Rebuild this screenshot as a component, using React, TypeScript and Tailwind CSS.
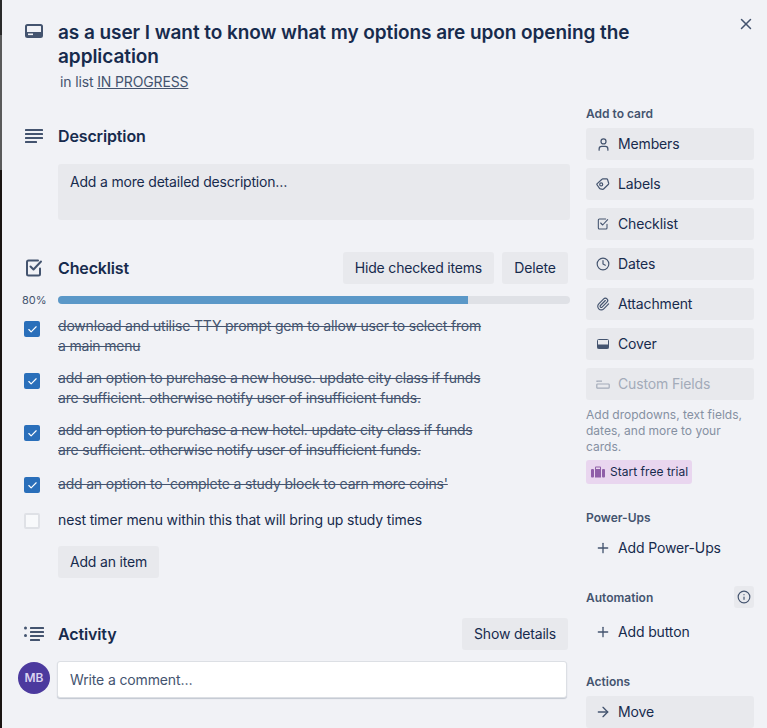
import React from 'react';
import { Check, Clock, Info, Paperclip, Plus, User, X, ArrowRight } from 'lucide-react';

const CardIcon = ({ className }: { className?: string }) => (
  <svg viewBox="0 0 18 14" className={className} fill="none">
    <rect x="1" y="1" width="16" height="12" rx="1.5" stroke="#44546f" strokeWidth="2" />
    <rect x="1" y="8" width="16" height="5" fill="#44546f" />
    <rect x="3" y="9.5" width="5" height="1.6" fill="#f1f2f6" />
  </svg>
);

const LinesIcon = () => (
  <svg width="18" height="16" viewBox="0 0 18 16" fill="#44546f">
    <rect x="0" y="0" width="18" height="2" rx="0.5" />
    <rect x="0" y="4" width="18" height="2" rx="0.5" />
    <rect x="0" y="8" width="18" height="2" rx="0.5" />
    <rect x="0" y="12" width="12" height="2" rx="0.5" />
  </svg>
);

const ChecklistIcon = ({ size = 18, stroke = 2 }: { size?: number; stroke?: number }) => (
  <svg width={size} height={size} viewBox="0 0 18 18" fill="none" stroke="#44546f" strokeWidth={stroke} strokeLinecap="round" strokeLinejoin="round">
    <path d="M15 9.5V15a1.5 1.5 0 0 1-1.5 1.5h-10A1.5 1.5 0 0 1 2 15V3a1.5 1.5 0 0 1 1.5-1.5H13" />
    <path d="M5.5 7.5 8.5 10.5 16 2.5" />
  </svg>
);

const ActivityIcon = () => (
  <svg width="20" height="16" viewBox="0 0 20 16" fill="#44546f">
    <circle cx="1.5" cy="2" r="1.5" />
    <circle cx="1.5" cy="9.5" r="1.5" />
    <rect x="6" y="1" width="14" height="2" rx="0.5" />
    <rect x="6" y="5" width="14" height="2" rx="0.5" />
    <rect x="6" y="9" width="14" height="2" rx="0.5" />
    <rect x="6" y="13" width="10" height="2" rx="0.5" />
  </svg>
);

const LabelIcon = () => (
  <svg width="14" height="14" viewBox="0 0 14 14" fill="none" stroke="#44546f" strokeWidth="1.2" strokeLinejoin="round">
    <path d="M1.2 6.6 6 2.2a1 1 0 0 1 .7-.3h4a1 1 0 0 1 .8.5l1.2 3.8a1 1 0 0 1-.2 1L7.6 12a1 1 0 0 1-.8.3l-2.5-.4a1 1 0 0 1-.6-.3L1.2 8a1 1 0 0 1 0-1.4Z" />
    <circle cx="5.2" cy="7.4" r="1.5" />
  </svg>
);

const CoverIcon = () => (
  <svg width="12" height="10" viewBox="0 0 12 10" fill="none">
    <rect x="0.5" y="0.5" width="11" height="9" rx="1" stroke="#44546f" />
    <rect x="0.5" y="5.5" width="11" height="4" fill="#44546f" />
  </svg>
);

const FieldsIcon = () => (
  <svg width="14" height="9" viewBox="0 0 14 9" fill="none" stroke="#a3abb9" strokeWidth="1.2">
    <path d="M1 2V1.2h5" />
    <rect x="0.8" y="4" width="12.4" height="4.2" rx="0.8" />
  </svg>
);

const BriefcaseIcon = () => (
  <svg width="14" height="12" viewBox="0 0 14 12" fill="#8f5fa8">
    <path d="M4 3V1.5A1 1 0 0 1 5 .5h4a1 1 0 0 1 1 1V3H9V1.6H5V3H4Z" />
    <rect x="0" y="3" width="3" height="8.5" rx="1" />
    <rect x="11" y="3" width="3" height="8.5" rx="1" />
    <rect x="4" y="3" width="6" height="8.5" />
  </svg>
);

const Btn = ({ icon, label, muted }: { icon?: React.ReactNode; label: string; muted?: boolean }) => (
  <div className={`h-8 rounded-[3px] bg-[#e8e9ed] flex items-center text-sm ${muted ? 'text-[#a3abb9]' : 'text-[#172b4d]'}`}>
    <span className="w-8 pl-[2px] flex justify-center shrink-0">{icon}</span>
    {label}
  </div>
);

const GhostBtn = ({ label }: { label: string }) => (
  <div className="h-8 flex items-center text-sm text-[#172b4d]">
    <span className="w-8 pl-[2px] flex justify-center shrink-0">
      <Plus size={16} color="#44546f" />
    </span>
    {label}
  </div>
);

const TextBtn = ({ label, className = '' }: { label: string; className?: string }) => (
  <div className={`h-8 px-3 rounded-[3px] bg-[#e8e9ed] flex items-center justify-center text-sm tracking-[-0.19px] text-[#172b4d] ${className}`}>{label}</div>
);

const SideLabel = ({ children }: { children: React.ReactNode }) => (
  <div className="text-xs leading-4 font-semibold tracking-normal text-[#44546f]">{children}</div>
);

const items = [
  { text: 'download and utilise TTY prompt gem to allow user to select from a main menu', done: true, row: 'mb-3', box: 'pt-[5px]' },
  { text: 'add an option to purchase a new house. update city class if funds are sufficient. otherwise notify user of insufficient funds.', done: true, row: 'mb-3', box: 'pt-[5px]' },
  { text: 'add an option to purchase a new hotel. update city class if funds are sufficient. otherwise notify user of insufficient funds.', done: true, row: 'mb-[14px]', box: 'pt-[5px]' },
  { text: "add an option to 'complete a study block to earn more coins'", done: true, row: 'mb-4', box: 'pt-[3px]' },
  { text: 'nest timer menu within this that will bring up study times', done: false, row: '', box: 'pt-[3px]' },
];

export default function App() {
  return (
    <div className="w-[767px] h-[728px] flex overflow-hidden bg-[#14100e] tracking-[-0.14px]" style={{ fontFamily: 'Inter, "Noto Sans", sans-serif' }}>
      <div className="w-[2px] shrink-0 flex flex-col">
        <div className="h-[35px] bg-[#2a2a2a]" />
        <div className="h-[135px] bg-[#5a5a5a]" />
        <div className="flex-1 bg-[#1a1412]" />
      </div>

      <div className="relative flex-1 bg-[#f1f2f6] flex h-[728px] overflow-hidden">
        <button className="absolute top-[15px] right-[12px]">
          <X size={18} color="#44546f" />
        </button>

        <div className="w-[568px] shrink-0 pt-[21px]">
          {/* header */}
          <div className="flex">
            <div className="w-[56px] pl-[23px] shrink-0 pt-[3px]">
              <CardIcon className="w-[18px] h-[14px]" />
            </div>
            <div className="w-[590px] shrink-0">
              <h1 className="text-[19px] leading-6 font-semibold tracking-[-0.07px] text-[#172b4d]">
                as a user I want to know what my options are upon opening the application
              </h1>
              <div className="mt-[3px] pl-[2px] text-sm leading-5 text-[#44546f]">
                in list <span className="underline">IN PROGRESS</span>
              </div>
            </div>
          </div>

          {/* description */}
          <div className="flex mt-[34px]">
            <div className="w-[56px] pl-[23px] shrink-0 pt-[3px]">
              <LinesIcon />
            </div>
            <div className="w-[512px]">
              <h2 className="text-base leading-5 font-semibold text-[#172b4d]">Description</h2>
              <div className="mt-[18px] h-14 rounded-[3px] bg-[#e8e9ed] px-3 py-2 text-sm leading-5 tracking-[-0.19px] text-[#172b4d]">
                Add a more detailed description…
              </div>
            </div>
          </div>

          {/* checklist */}
          <div className="flex mt-8 h-8 items-center">
            <div className="w-[56px] pl-[23px] shrink-0">
              <ChecklistIcon />
            </div>
            <div className="w-[510px] flex items-center justify-between">
              <h2 className="text-base leading-5 font-semibold text-[#172b4d]">Checklist</h2>
              <div className="flex gap-2">
                <TextBtn label="Hide checked items" />
                <TextBtn label="Delete" className="w-[66px]" />
              </div>
            </div>
          </div>

          <div className="flex items-center mt-3 h-2">
            <div className="w-[56px] pl-[20px] shrink-0 text-[11px] tracking-normal text-[#44546f]">80%</div>
            <div className="w-[512px] h-2 rounded-full bg-[#dfe1e6] overflow-hidden">
              <div className="h-full w-[80%] bg-[#5b98c8]" />
            </div>
          </div>

          <div className="mt-3 flex flex-col">
            {items.map(item => (
              <div key={item.text} className={`flex ${item.row}`}>
                <div className={`w-[56px] pl-[22px] shrink-0 ${item.box}`}>
                  {item.done ? (
                    <div className="w-4 h-4 rounded-[2px] bg-[#2a6fba] flex items-center justify-center">
                      <Check size={11} color="#ffffff" strokeWidth={2.5} />
                    </div>
                  ) : (
                    <div className="w-4 h-4 rounded-[2px] bg-[#f8f9fb] border-2 border-[#dfe1e6]" />
                  )}
                </div>
                <div className={`w-[430px] text-sm leading-5 ${item.done ? 'line-through tracking-[-0.19px] text-[#44546f]' : 'text-[#172b4d]'}`}>
                  {item.text}
                </div>
              </div>
            ))}
          </div>

          <div className="mt-4 ml-[56px] w-fit">
            <TextBtn label="Add an item" />
          </div>

          {/* activity */}
          <div className="flex mt-10 h-8 items-center">
            <div className="w-[56px] pl-[22px] shrink-0">
              <ActivityIcon />
            </div>
            <div className="w-[510px] flex items-center justify-between">
              <h2 className="text-base leading-5 font-semibold text-[#172b4d]">Activity</h2>
              <TextBtn label="Show details" />
            </div>
          </div>

          <div className="flex mt-[11px] items-start">
            <div className="w-[55px] pl-[16px] shrink-0 pt-[1px]">
              <div className="w-8 h-8 rounded-full bg-[#4c3a9e] flex items-center justify-center text-xs font-semibold tracking-normal text-[#d9d3f0]">
                MB
              </div>
            </div>
            <div className="w-[510px] h-[37px] rounded-[3px] bg-white border border-[#dcdfe4] shadow-[0_1px_1px_rgba(9,30,66,0.2)] pl-3 flex items-center text-sm text-[#44546f]">
              Write a comment…
            </div>
          </div>
        </div>

        {/* sidebar */}
        <div className="w-[168px] ml-[16px] shrink-0 pt-[106px]">
          <SideLabel>Add to card</SideLabel>
          <div className="mt-[6px] flex flex-col gap-2">
            <Btn icon={<User size={15} color="#44546f" />} label="Members" />
            <Btn icon={<LabelIcon />} label="Labels" />
            <Btn icon={<ChecklistIcon size={12} stroke={1.6} />} label="Checklist" />
            <Btn icon={<Clock size={14} color="#44546f" strokeWidth={2} />} label="Dates" />
            <Btn icon={<Paperclip size={14} color="#44546f" />} label="Attachment" />
            <Btn icon={<CoverIcon />} label="Cover" />
            <Btn icon={<FieldsIcon />} label="Custom Fields" muted />
          </div>
          <p className="mt-[7px] text-xs leading-4 tracking-normal text-[#8590a2]">
            Add dropdowns, text fields, dates, and more to your cards.
          </p>
          <div className="mt-[5px] w-[106px] h-6 rounded-[3px] bg-[#e9d6ef] pl-[5px] flex items-center gap-[5px] text-xs tracking-[0.03px] text-[#172b4d]">
            <BriefcaseIcon />
            Start free trial
          </div>

          <div className="mt-[26px]">
            <SideLabel>Power-Ups</SideLabel>
          </div>
          <div className="mt-[6px]">
            <GhostBtn label="Add Power-Ups" />
          </div>

          <div className="mt-[22px] h-[22px] flex items-center justify-between">
            <div className="mt-[1px]">
              <SideLabel>Automation</SideLabel>
            </div>
            <div className="w-5 h-[22px] rounded-[3px] bg-[#e8e9ed] flex items-center justify-center">
              <Info size={14} color="#44546f" />
            </div>
          </div>
          <div className="mt-[8px]">
            <GhostBtn label="Add button" />
          </div>

          <div className="mt-[26px]">
            <SideLabel>Actions</SideLabel>
          </div>
          <div className="mt-[6px]">
            <Btn icon={<ArrowRight size={16} color="#44546f" />} label="Move" />
          </div>
        </div>
      </div>
    </div>
  );
}
